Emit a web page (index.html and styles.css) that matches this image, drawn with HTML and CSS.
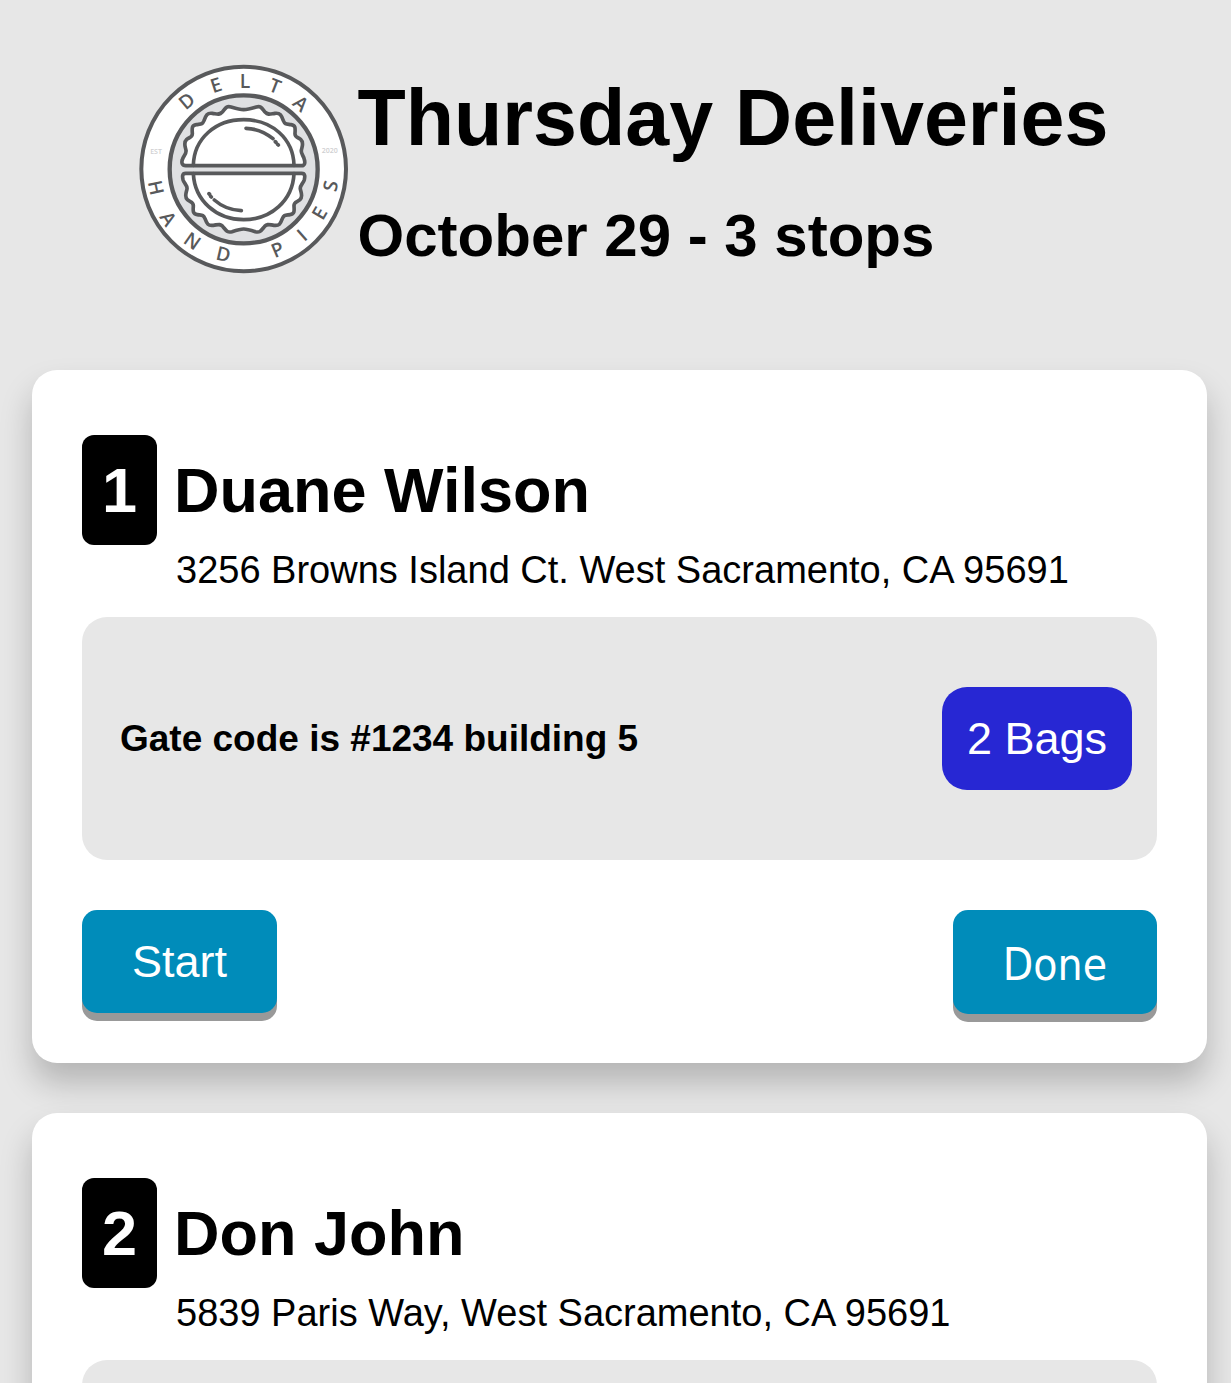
FILE: index.html
```html
<!DOCTYPE html>
<html lang="en">
<head>
<meta charset="utf-8">
<meta name="viewport" content="width=device-width, initial-scale=1">
<title>Thursday Deliveries</title>
<link rel="stylesheet" href="styles.css">
</head>
<body>
<header class="header">
  <svg class="logo" viewBox="-20 -10 702 702" role="img" aria-label="Delta Hand Pies">
    <circle cx="339" cy="341" r="307" fill="#fff" stroke="#58595b" stroke-width="12"/>
    <circle cx="339" cy="342" r="222" fill="#dfe0e2" stroke="#58595b" stroke-width="13"/>
    <g fill="#fff" stroke="#58595b" stroke-width="11" stroke-linejoin="round" stroke-linecap="round">
      <path d="M165 331C154 331 152 322 155 313C158 302 168 296 166 285C164 273 157 262 168 252C177 245 186 247 185 234C184 218 183 210 197 208C211 206 215 208 220 196C226 180 229 172 245 174C259 176 266 180 274 171C285 158 287 151 301 155C314 159 326 163 339 163C352 163 364 159 377 155C391 151 393 158 404 171C412 180 419 176 433 174C449 172 452 180 458 196C463 208 467 206 481 208C495 210 494 218 493 234C492 247 501 245 510 252C521 262 514 273 512 285C510 296 520 302 521 313C524 322 522 331 513 331Z"/>
      <path d="M165 354C154 354 155 364 157 373C160 384 171 390 169 401C167 413 160 424 170 433C179 441 189 439 188 452C187 468 186 476 200 478C214 480 218 478 223 490C229 506 232 512 248 510C262 508 268 504 276 513C287 526 290 533 304 529C316 525 328 521 339 521C350 521 362 525 374 529C388 533 391 526 402 513C410 504 416 508 430 510C446 512 449 506 455 490C460 478 464 480 478 478C492 476 491 468 490 452C489 439 499 441 508 433C518 424 511 413 509 401C507 390 518 384 521 373C523 364 524 354 513 354Z"/>
      <path d="M188 330C190 250 254 193 339 193S488 250 490 330M188 355C192 435 256 493 339 493S486 435 490 355" fill="none"/>
      <path d="M346 219Q390 220 427 250M434 259l2 2M441 267l2 2M235 415l2 2M240 423l2 2M251 434Q285 464 332 466" fill="none"/>
    </g>
    <g class="logo-letters">
      <text transform="translate(169 137) rotate(-40)" y="20">D</text>
      <text transform="translate(256 90) rotate(-18)" y="20">E</text>
      <text transform="translate(343 77)" y="20">L</text>
      <text transform="translate(433 93) rotate(21)" y="20">T</text>
      <text transform="translate(510 145) rotate(41)" y="20">A</text>
      <text transform="translate(75 397) rotate(78)" y="20">H</text>
      <text transform="translate(112 490) rotate(57)" y="20">A</text>
      <text transform="translate(185 557) rotate(35)" y="20">N</text>
      <text transform="translate(278 597) rotate(13)" y="20">D</text>
      <text transform="translate(441 583) rotate(-23)" y="20">P</text>
      <text transform="translate(514 540) rotate(-41)" y="20">I</text>
      <text transform="translate(567 474) rotate(-60)" y="20">E</text>
      <text transform="translate(600 392) rotate(-79)" y="20">S</text>
    </g>
    <g class="logo-small">
      <text x="76" y="297">EST</text>
      <text x="597" y="294">2020</text>
    </g>
  </svg>
  <div class="headings">
    <h1 class="title">Thursday Deliveries</h1>
    <h2 class="subtitle">October 29 - 3 stops</h2>
  </div>
</header>
<main class="stops">
  <article class="card">
    <div class="stop-head">
      <span class="number">1</span>
      <h3 class="name">Duane Wilson</h3>
    </div>
    <p class="address">3256 Browns Island Ct. West Sacramento, CA 95691</p>
    <div class="note">
      <p class="note-text">Gate code is #1234 building 5</p>
      <span class="bags">2 Bags</span>
    </div>
    <div class="actions">
      <a class="button" href="#start">Start</a>
      <button class="button button-done" type="button">Done</button>
    </div>
  </article>
  <article class="card">
    <div class="stop-head">
      <span class="number">2</span>
      <h3 class="name">Don John</h3>
    </div>
    <p class="address">5839 Paris Way, West Sacramento, CA 95691</p>
    <div class="note"></div>
  </article>
</main>
</body>
</html>
```
FILE: styles.css
```css
* {
  box-sizing: border-box;
}

body {
  margin: 0;
  padding: 0 24px 0 32px;
  background: #e7e7e7;
  color: #000;
  font-family: Arial, "Liberation Sans", sans-serif;
}

h1, h2, h3, p {
  margin: 0;
}

.header {
  display: flex;
  justify-content: center;
  align-items: flex-start;
  padding: 52px 7px 84px 0;
}

.logo {
  flex: none;
  width: 234px;
  height: 234px;
}

.logo-letters {
  fill: #58595b;
  font: 600 58px "Open Sans", sans-serif;
  text-anchor: middle;
}

.logo-small {
  fill: #cfcfd1;
  font: 600 21px "Open Sans", sans-serif;
  text-anchor: middle;
}

.headings {
  display: grid;
  gap: 38px;
  padding-top: 20px;
}

.title {
  font-size: 79px;
  line-height: 92px;
}

.subtitle {
  font-size: 60px;
  line-height: 68px;
}

.stops {
  display: grid;
  gap: 50px;
}

.card {
  padding: 65px 50px 49px;
  border-radius: 25px;
  background: #fff;
  box-shadow: 0 20px 32px rgba(0, 0, 0, 0.22);
}

.stop-head {
  display: flex;
  align-items: center;
  gap: 17px;
}

.number {
  width: 75px;
  border-radius: 12px;
  background: #000;
  color: #fff;
  font-size: 63px;
  font-weight: bold;
  line-height: 110px;
  text-align: center;
}

.name {
  font-size: 63px;
  line-height: 72px;
}

.address {
  margin: 3px 0 25px;
  padding-left: 94px;
  font-size: 38px;
  line-height: 44px;
}

.note {
  display: flex;
  justify-content: space-between;
  align-items: center;
  min-height: 243px;
  padding: 25px 25px 25px 38px;
  border-radius: 25px;
  background: #e7e7e7;
}

.note-text {
  font-size: 37px;
  font-weight: bold;
  line-height: 44px;
}

.bags {
  padding: 25px;
  border-radius: 25px;
  background: #2727d3;
  color: #fff;
  font-size: 45px;
  line-height: 53px;
}

.actions {
  display: flex;
  justify-content: space-between;
  align-items: flex-start;
  margin-top: 50px;
}

.button {
  padding: 25px 50px;
  border: 0;
  border-radius: 15px;
  background: #008cba;
  box-shadow: 0 8px 0 #999;
  color: #fff;
  font-family: inherit;
  font-size: 45px;
  line-height: 53px;
  text-decoration: none;
}

.button-done {
  padding: 28px 50px 22px;
  font-family: Tahoma, "DejaVu Sans Condensed", "DejaVu Sans", sans-serif;
  font-size: 44px;
  line-height: 54px;
}
```
